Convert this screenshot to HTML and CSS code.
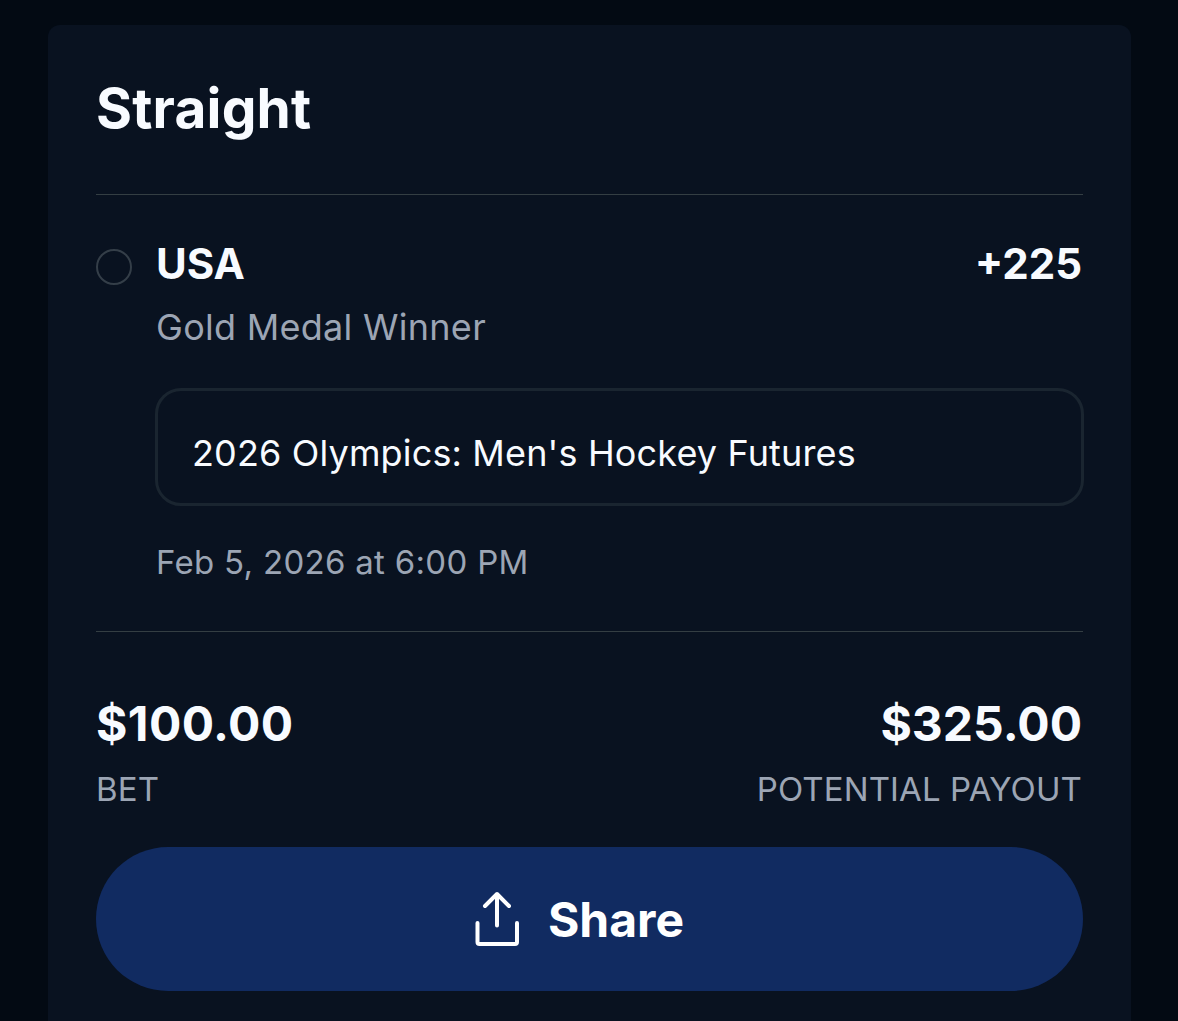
FILE: index.html
```html
<!DOCTYPE html>
<html lang="en">
<head>
    <meta charset="UTF-8">
    <title>Bet Slip</title>
    <link rel="stylesheet" href="styles.css">
</head>
<body>
    <div class="bet-card">
        <h1>Straight</h1>

        <div class="selection">
            <span class="status-dot"></span>
            <div class="selection-info">
                <div class="selection-row">
                    <h2>USA</h2>
                    <span class="odds">+225</span>
                </div>
                <p class="market">Gold Medal Winner</p>
                <div class="event">2026 Olympics: Men's Hockey Futures</div>
                <p class="date">Feb 5, 2026 at 6:00 PM</p>
            </div>
        </div>

        <div class="totals">
            <div class="total">
                <span class="amount stake">$100.00</span>
                <span class="label">BET</span>
            </div>
            <div class="total total-right">
                <span class="amount">$325.00</span>
                <span class="label">POTENTIAL PAYOUT</span>
            </div>
        </div>

        <button class="btn-share">
            <svg class="share-icon" width="48" height="56" viewBox="0 0 48 56" fill="none" stroke="currentColor" stroke-width="4" stroke-linecap="round" stroke-linejoin="round">
                <path d="M24 34.5V3M12 15L24 3L36 15"/>
                <path d="M4.500 32V51Q4.500 53 6.500 53H42Q44 53 44 51V32"/>
            </svg>
            <span class="share-text">Share</span>
        </button>
    </div>
</body>
</html>
```

FILE: styles.css
```css
:root {
    --page: #030a13;
    --card: #091220;
    --line: #343e43;
    --text: #f8fbff;
    --muted: #9ca5b4;
    --primary: #112b61;
}

* {
    box-sizing: border-box;
}

body {
    margin: 0;
    padding: 25px 47px 0 48px;
    height: 1021px;
    overflow: hidden;
    background: var(--page);
    color: var(--text);
    font-family: Inter, sans-serif;
}

h1, h2, p {
    margin: 0;
}

.bet-card {
    height: 1010px;
    padding: 0 48px;
    border-radius: 12px;
    background: var(--card);
}

h1 {
    height: 170px;
    padding-top: 48px;
    border-bottom: 1px solid var(--line);
    font-size: 55px;
    line-height: 70px;
    font-weight: 700;
    letter-spacing: 0.2px;
}

.selection {
    display: flex;
    gap: 24px;
    height: 437px;
    padding-top: 39px;
    border-bottom: 1px solid var(--line);
}

.status-dot {
    flex: none;
    width: 36px;
    height: 36px;
    margin-top: 15px;
    border: 2px solid #343e48;
    border-radius: 50%;
}

.selection-info {
    flex: 1;
}

.selection-row {
    display: flex;
    justify-content: space-between;
    padding-right: 1px;
    font-size: 42px;
    line-height: 60px;
}

h2 {
    font-size: 42px;
    font-weight: 700;
}

.odds {
    font-weight: 700;
}

.market {
    font-size: 36px;
    line-height: 66px;
    letter-spacing: 0.28px;
    color: var(--muted);
}

.event {
    height: 118px;
    margin: 28px -1px 0;
    padding: 0 34px;
    border: 3px solid #1a2530;
    border-radius: 26px;
    font-size: 36px;
    line-height: 124px;
    letter-spacing: 0.15px;
}

.date {
    margin-top: 30px;
    font-size: 33px;
    line-height: 52px;
    letter-spacing: 0.3px;
    color: var(--muted);
}

.totals {
    display: flex;
    justify-content: space-between;
    height: 215px;
    padding: 61px 1px 0 0;
}

.total {
    display: flex;
    flex-direction: column;
}

.total-right {
    align-items: flex-end;
}

.amount {
    font-size: 48px;
    line-height: 62px;
    font-weight: 700;
}

.stake {
    letter-spacing: 0.4px;
}

.label {
    font-size: 33px;
    line-height: 69px;
    letter-spacing: 0.1px;
    color: var(--muted);
}

.btn-share {
    display: flex;
    align-items: center;
    justify-content: center;
    gap: 27px;
    width: 100%;
    height: 144px;
    padding: 0 22px 0 0;
    border: none;
    border-radius: 72px;
    background: var(--primary);
    color: white;
    font-family: inherit;
    font-size: 48px;
    font-weight: 700;
}
```
